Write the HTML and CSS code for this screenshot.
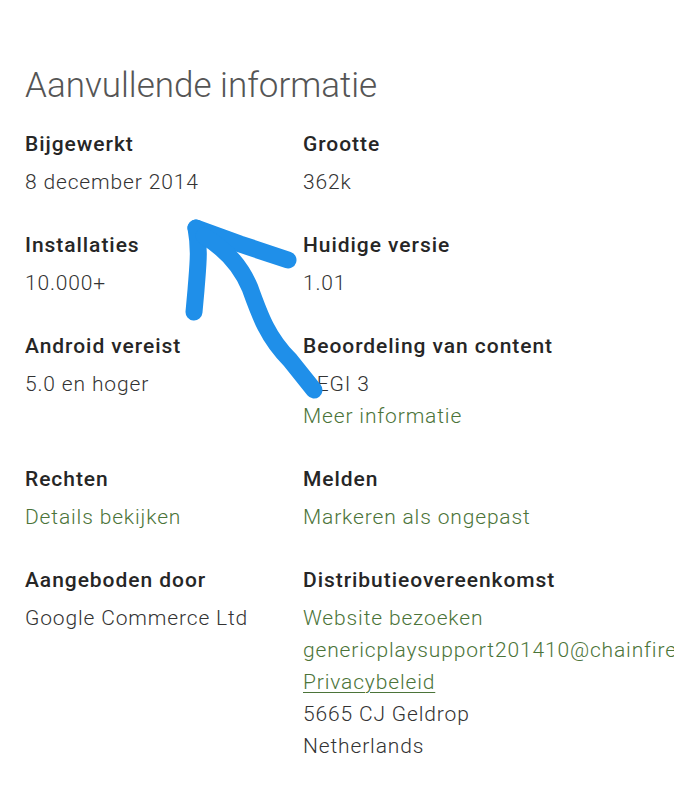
FILE: index.html
```html
<!DOCTYPE html>
<html lang="nl">
<head>
<meta charset="utf-8">
<title>Aanvullende informatie</title>
<link rel="stylesheet" href="styles.css">
</head>
<body>
<div class="page">
  <h1 class="title">Aanvullende informatie</h1>
  <div class="grid">
    <div class="cell">
      <div class="label">Bijgewerkt</div>
      <div class="values"><div class="val">8 december 2014</div></div>
    </div>
    <div class="cell">
      <div class="label">Grootte</div>
      <div class="values"><div class="val">362k</div></div>
    </div>
    <div class="cell">
      <div class="label">Installaties</div>
      <div class="values"><div class="val">10.000+</div></div>
    </div>
    <div class="cell">
      <div class="label">Huidige versie</div>
      <div class="values"><div class="val">1.01</div></div>
    </div>
    <div class="cell">
      <div class="label">Android vereist</div>
      <div class="values"><div class="val">5.0 en hoger</div></div>
    </div>
    <div class="cell">
      <div class="label">Beoordeling van content</div>
      <div class="values">
        <div class="val">PEGI 3</div>
        <div class="val link">Meer informatie</div>
      </div>
    </div>
    <div class="cell">
      <div class="label">Rechten</div>
      <div class="values"><div class="val link">Details bekijken</div></div>
    </div>
    <div class="cell">
      <div class="label">Melden</div>
      <div class="values"><div class="val link">Markeren als ongepast</div></div>
    </div>
    <div class="cell">
      <div class="label">Aangeboden door</div>
      <div class="values"><div class="val">Google Commerce Ltd</div></div>
    </div>
    <div class="cell">
      <div class="label">Distributieovereenkomst</div>
      <div class="values">
        <div class="val link">Website bezoeken</div>
        <div class="val link">genericplaysupport201410@chainfire.eu</div>
        <div class="val link underline">Privacybeleid</div>
        <div class="val">5665 CJ Geldrop</div>
        <div class="val">Netherlands</div>
      </div>
    </div>
  </div>
  <svg class="annotation" width="674" height="800" viewBox="0 0 674 800" aria-hidden="true">
    <g fill="none" stroke="#1f8fe9" stroke-width="17" stroke-linecap="round" stroke-linejoin="round">
      <path d="M288 260 L240 244 L196 228"/>
      <path d="M196 228 C200 250 198 264 196 290 L194 312"/>
      <path d="M204 236 C224 248 240 264 250 288 C260 316 268 338 290 360 L314 390"/>
    </g>
  </svg>
</div>
</body>
</html>
```

FILE: styles.css
```css
html, body {
  margin: 0;
  padding: 0;
  background: #ffffff;
}

body {
  width: 674px;
  height: 800px;
  overflow: hidden;
  font-family: Roboto, "Noto Sans", "Liberation Sans", sans-serif;
}

.page {
  position: relative;
  width: 674px;
  height: 800px;
  padding: 61px 0 0 25px;
  box-sizing: border-box;
}

.title {
  margin: 0;
  font-size: 35px;
  font-weight: 300;
  line-height: 50px;
  color: #555555;
}

.grid {
  display: grid;
  grid-template-columns: 278px 1fr;
  row-gap: 31px;
  margin-top: 17px;
}

.cell {
  display: flex;
  flex-direction: column;
  min-width: 0;
}

.label {
  font-size: 21px;
  font-weight: 500;
  line-height: 32px;
  letter-spacing: 0.95px;
  color: #262626;
}

.values {
  margin-top: 6px;
  display: flex;
  flex-direction: column;
}

.val {
  font-size: 21px;
  font-weight: 300;
  line-height: 32px;
  letter-spacing: 0.85px;
  color: #333333;
  white-space: nowrap;
}

.link {
  color: #4b7439;
}

.underline {
  text-decoration: underline;
  text-underline-offset: 3px;
  text-decoration-thickness: 1px;
}

.annotation {
  position: absolute;
  left: 0;
  top: 0;
  pointer-events: none;
}
```
